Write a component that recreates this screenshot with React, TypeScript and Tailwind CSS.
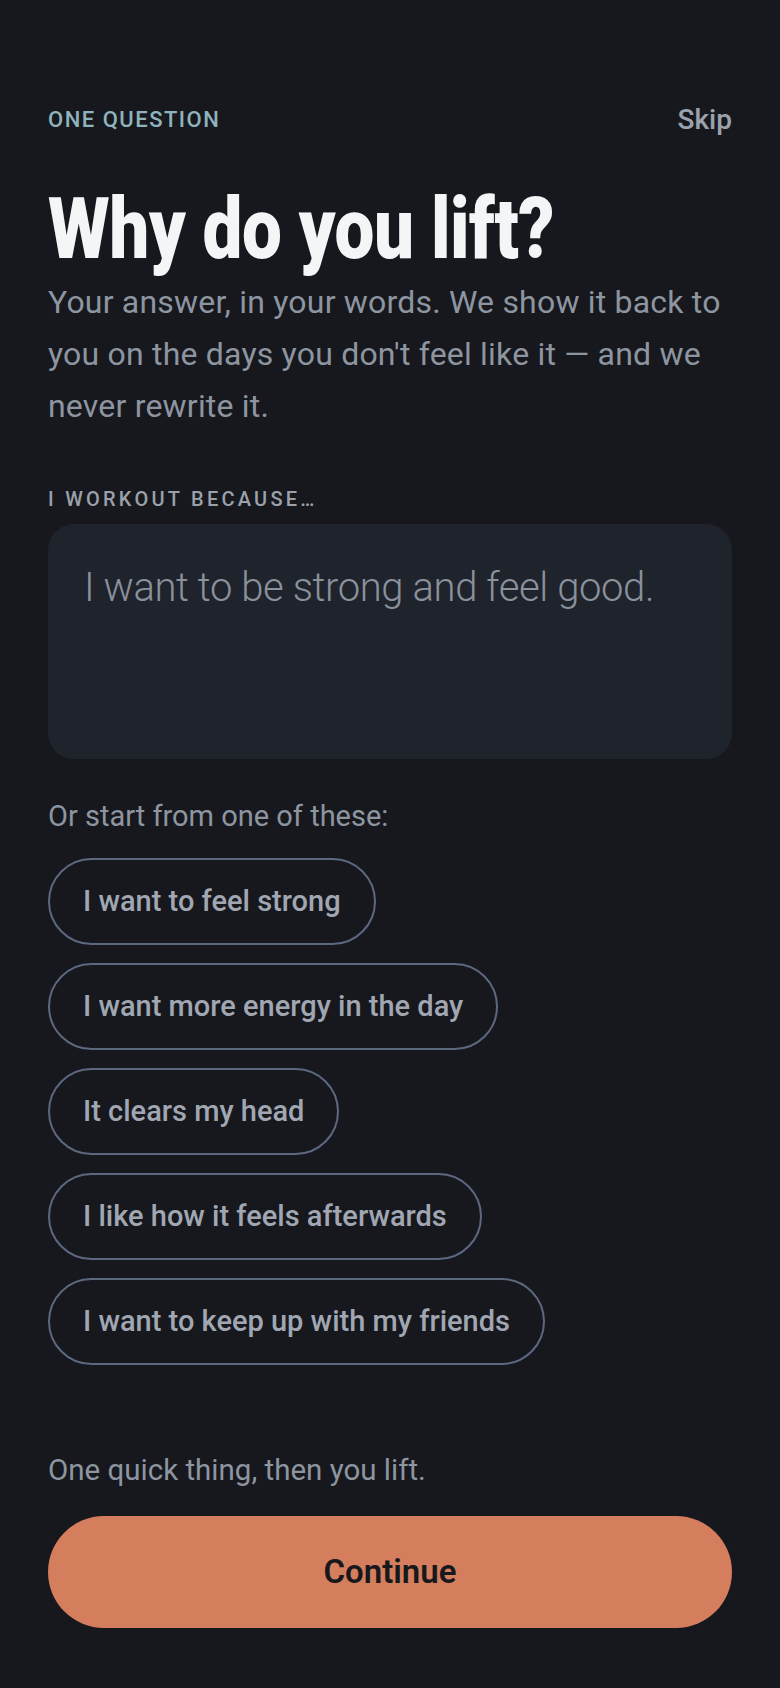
import { useState } from "react";

const starters = [
  "I want to feel strong",
  "I want more energy in the day",
  "It clears my head",
  "I like how it feels afterwards",
  "I want to keep up with my friends",
];

export default function App() {
  const [reason, setReason] = useState("");

  return (
    <div className="min-h-screen bg-[#17181d] font-[Roboto,sans-serif] text-[#8d95a0]">
      <div className="flex flex-col px-[48px] pt-[103px] pb-[60px]">
        {/* Top bar */}
        <div className="flex items-center justify-between">
          <span className="text-[22px] leading-[34px] font-medium tracking-[1.5px] text-[#8fb3bc]">
            ONE QUESTION
          </span>
          <button className="text-[28px] leading-[34px] font-medium text-[#9aa3ad]">
            Skip
          </button>
        </div>

        {/* condensed headline */}
        <h1 className="mt-[49px] origin-left scale-x-[0.825] text-[86px] leading-[85px] font-black tracking-[-0.5px] text-[#f4f5f7]">
          Why do you lift?
        </h1>

        <p className="mt-[5px] text-[32px] leading-[52px] tracking-[0.2px]">
          Your answer, in your words. We show it back to you on the days you
          don't feel like it — and we never rewrite it.
        </p>

        <label className="mt-[55px] text-[20px] leading-[24px] font-medium tracking-[3.25px] text-[#9aa1aa]">
          I WORKOUT BECAUSE…
        </label>
        <textarea
          value={reason}
          onChange={(e) => setReason(e.target.value)}
          placeholder="I want to be strong and feel good."
          className="mt-[13px] h-[235px] w-full resize-none rounded-[26px] bg-[#1f232b] px-[36px] pt-[40px] text-[40px] leading-[48px] font-light tracking-[-0.4px] text-[#c9ced6] outline-none placeholder:text-[#8a919b]"
        />

        <p className="mt-[39px] text-[29px] leading-[36px]">
          Or start from one of these:
        </p>

        {/* Starter chips */}
        <div className="mt-[24px] flex flex-col items-start gap-[18px]">
          {starters.map((s) => (
            <button
              key={s}
              onClick={() => setReason(s)}
              className="h-[87px] rounded-full border-2 border-[#5c6880] px-[33px] text-[29px] font-medium text-[#a0a7b2]"
            >
              {s}
            </button>
          ))}
        </div>

        <p className="mt-[87px] text-[29.5px] leading-[36px]">
          One quick thing, then you lift.
        </p>
        <button className="mt-[28px] h-[112px] w-full rounded-full bg-[#d47e5e] text-[33px] font-semibold text-[#17181c]">
          Continue
        </button>
      </div>
    </div>
  );
}
